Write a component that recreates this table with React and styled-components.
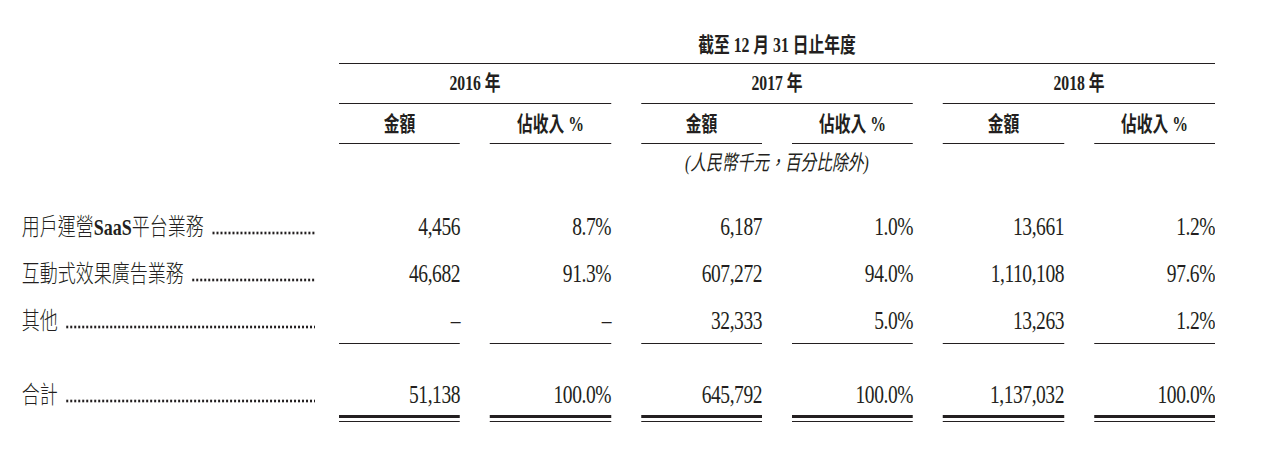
import styled, { createGlobalStyle } from "styled-components";

const ink = "#231f20";

const GlobalStyle = createGlobalStyle`
  html, body {
    margin: 0;
    padding: 0;
    background: #ffffff;
    overflow: hidden;
  }
`;

const Page = styled.div`
  width: 1266px;
  height: 468px;
  overflow: hidden;
  background: #ffffff;
`;

// the source page is a condensed serif print, so the whole sheet is narrowed
const Sheet = styled.div`
  display: grid;
  grid-template-columns: 383px repeat(6, 161.33px);
  column-gap: 40px;
  width: max-content;
  padding-left: 29px;
  transform: scaleX(0.75);
  transform-origin: 0 0;
  font-family: "Liberation Serif", "Noto Sans CJK TC", serif;
  color: ${ink};
`;

const Blank = styled.div``;

const HeadCell = styled.div`
  grid-column: span ${({ $span }) => $span || 1};
  font-size: 21px;
  line-height: 22px;
  font-weight: 700;
  text-align: center;
  white-space: nowrap;
  padding: ${({ $pad }) => $pad};
  border-bottom: 1px solid ${ink};
`;

const Note = styled.div`
  grid-column: 2 / span 6;
  font-size: 21px;
  line-height: 22px;
  font-style: italic;
  text-align: center;
  padding: 8px 0 20px;
`;

const Label = styled.div`
  display: flex;
  align-items: baseline;
  font-size: 24px;
  line-height: 28px;
  font-weight: 300;
  white-space: nowrap;
  padding-top: ${({ $top }) => $top}px;
`;

const Strong = styled.b`
  font-weight: 700;
`;

// dot leader running from the label to the first figure column
const Leader = styled.span`
  flex: 1;
  height: 4px;
  margin: 0 -8px 0 10px;
  background: radial-gradient(circle at center, ${ink} 1.3px, transparent 1.8px) left center / 5.33px 4px repeat-x;
`;

const Value = styled.div`
  font-size: 26px;
  letter-spacing: -0.6px;
  line-height: 28px;
  text-align: right;
  white-space: nowrap;
  padding-top: ${({ $top }) => $top}px;
  padding-bottom: ${({ $rule }) => ($rule === "single" ? 8 : $rule === "double" ? 12 : 0)}px;
  border-bottom: ${({ $rule }) => ($rule ? `1px solid ${ink}` : "none")};
  background: ${({ $rule }) =>
    $rule === "double"
      ? `linear-gradient(${ink}, ${ink}) left 0 bottom 3px / 100% 3px no-repeat`
      : "none"};
`;

const years = ["2016 年", "2017 年", "2018 年"];

const rows = [
  {
    label: (
      <>
        用戶運營<Strong>SaaS</Strong>平台業務
      </>
    ),
    values: ["4,456", "8.7%", "6,187", "1.0%", "13,661", "1.2%"],
    top: 19,
  },
  {
    label: "互動式效果廣告業務",
    values: ["46,682", "91.3%", "607,272", "94.0%", "1,110,108", "97.6%"],
    top: 19,
  },
  {
    label: "其他",
    values: ["–", "–", "32,333", "5.0%", "13,263", "1.2%"],
    top: 19,
    rule: "single",
  },
  {
    label: "合計",
    values: ["51,138", "100.0%", "645,792", "100.0%", "1,137,032", "100.0%"],
    top: 37,
    rule: "double",
  },
];

function App() {
  return (
    <Page>
      <GlobalStyle />
      <Sheet>
        <Blank />
        <HeadCell $span={6} $pad="34px 0 7px">
          截至 12 月 31 日止年度
        </HeadCell>

        <Blank />
        {years.map((year) => (
          <HeadCell key={year} $span={2} $pad="8px 0 9px">
            {year}
          </HeadCell>
        ))}

        <Blank />
        {years.map((year) => [
          <HeadCell key={year + "amt"} $pad="9px 0 8px">
            金額
          </HeadCell>,
          <HeadCell key={year + "pct"} $pad="9px 0 8px">
            佔收入 %
          </HeadCell>,
        ])}

        <Blank />
        <Note>(人民幣千元，百分比除外)</Note>

        {rows.map((row, i) => [
          <Label key={"l" + i} $top={row.top}>
            <span>{row.label}</span>
            <Leader />
          </Label>,
          ...row.values.map((value, j) => (
            <Value key={"v" + i + j} $top={row.top} $rule={row.rule}>
              {value}
            </Value>
          )),
        ])}
      </Sheet>
    </Page>
  );
}

export default App;
